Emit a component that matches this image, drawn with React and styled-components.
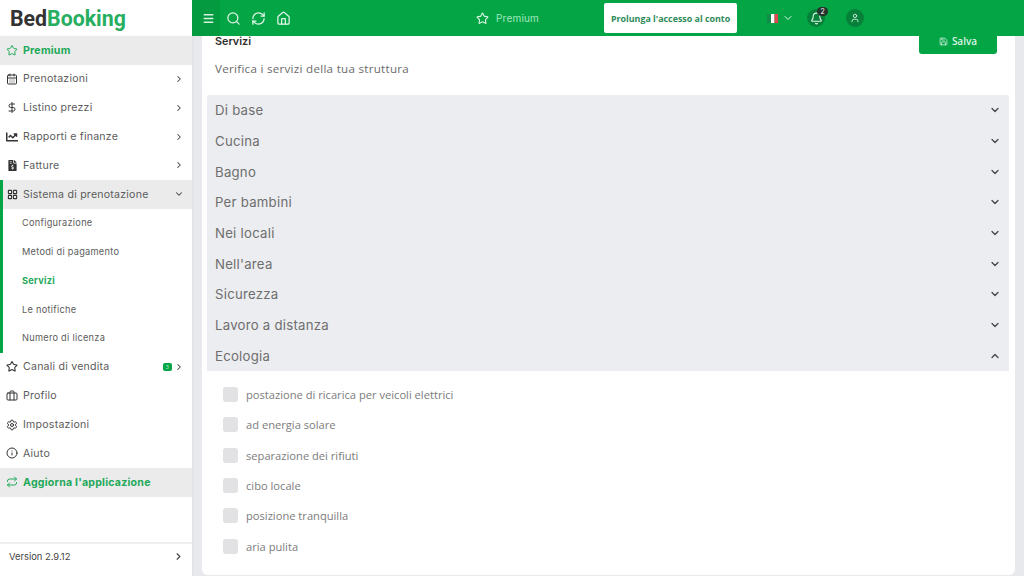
import React from 'react'
import styled, { createGlobalStyle } from 'styled-components'
import {
  Star, CalendarDays, DollarSign, LayoutGrid, Briefcase, Settings, Info, Repeat,
  Menu, Search, RefreshCw, Home, Bell, User, ChevronDown, ChevronUp, ChevronRight, Save,
} from 'lucide-react'
import { FaChartLine, FaFileInvoiceDollar } from 'react-icons/fa'

const GREEN = '#03a545'

const Global = createGlobalStyle`
  html, body { margin: 0; padding: 0; height: 100%; overflow: hidden; }
  body { font-family: "Inter", "Liberation Sans", sans-serif; background: #e8e9ed; }
  * { box-sizing: border-box; }
`

const Page = styled.div`
  display: grid;
  grid-template-columns: 192px 1fr;
  grid-template-rows: 36px 540px;
  width: 1024px;
  height: 576px;
  overflow: hidden;
`

const LogoBox = styled.div`
  display: flex;
  align-items: center;
  padding-left: 10px;
  background: #fff;
  font-family: "Roboto", "Liberation Sans", sans-serif;
  font-size: 21.3px;
  font-weight: 700;
  color: #333;
  span { color: #27ae60; }
`

const TopBar = styled.header`
  display: flex;
  align-items: center;
  background: ${GREEN};
  color: #fff;
`

const BurgerButton = styled.div`
  display: flex;
  align-items: center;
  justify-content: center;
  width: 28px;
  height: 36px;
  padding-left: 4px;
  background: #049a40;
  color: #d5f3e0;
`

const TopIcons = styled.div`
  display: flex;
  align-items: center;
  gap: 10px;
  margin-left: 6px;
  color: #e2f7ea;
`

const PremiumLink = styled.div`
  display: flex;
  align-items: center;
  gap: 7px;
  margin-left: 185px;
  font-size: 10px;
  letter-spacing: .2px;
  color: #a5e6bf;
  svg { color: #e2f7ea; }
`

const ExtendButton = styled.div`
  display: flex;
  align-items: center;
  justify-content: center;
  width: 133px;
  height: 30px;
  margin-left: 65px;
  border-radius: 2px;
  background: #fff;
  color: #2d8a58;
  font-family: "Open Sans", sans-serif;
  font-size: 8.9px;
  font-weight: 700;
  white-space: nowrap;
`

const FlagPicker = styled.div`
  display: flex;
  align-items: center;
  gap: 4px;
  margin-left: 30px;
  color: #e2f7ea;
`

const RoundIcon = styled.div`
  position: relative;
  display: flex;
  align-items: center;
  justify-content: center;
  width: 18px;
  height: 18px;
  margin-left: ${p => p.$gap}px;
  border-radius: 50%;
  background: #07803a;
  color: #dff5e8;
`

const Badge = styled.span`
  position: absolute;
  top: -2px;
  right: -3px;
  width: 11px;
  height: 9px;
  border-radius: 5px;
  background: #24332b;
  color: #fff;
  font-size: 7px;
  line-height: 9px;
  text-align: center;
`

const Sidebar = styled.nav`
  display: flex;
  flex-direction: column;
  background: #fff;
  box-shadow: 1px 0 3px rgba(0, 0, 0, .04);
`

const MenuList = styled.div`
  flex: 1;
`

const MenuRow = styled.div`
  display: flex;
  align-items: center;
  height: 28.8px;
  padding: 0 8px .5px 6px;
  background: ${p => (p.$shaded ? '#ebebeb' : 'transparent')};
  border-left: ${p => (p.$bar ? `3px solid ${GREEN}` : 'none')};
  padding-left: ${p => (p.$bar ? '3px' : '6px')};
  color: ${p => (p.$accent ? '#1fa95a' : '#5c5c5c')};
  font-size: 10.6px;
  font-weight: ${p => (p.$accent ? 700 : 400)};
  letter-spacing: .22px;
`

const MenuIcon = styled.span`
  display: flex;
  justify-content: center;
  width: 12px;
  margin-right: 5px;
  color: ${p => (p.$accent ? '#1fa95a' : '#333')};
`

const MenuLabel = styled.span`
  flex: 1;
`

const SubRow = styled.div`
  display: flex;
  align-items: center;
  height: 28.8px;
  padding: 0 0 1px 19px;
  border-left: 3px solid ${GREEN};
  color: ${p => (p.$active ? '#1fa95a' : '#5c5c5c')};
  font-size: 9.2px;
  font-weight: ${p => (p.$active ? 700 : 400)};
  letter-spacing: .28px;
`

const Arrow = styled.span`
  display: flex;
  color: #444;
`

const CountPill = styled.span`
  width: 9px;
  height: 8px;
  margin-right: 2px;
  border-radius: 2px;
  background: ${GREEN};
  color: #bfeed2;
  font-size: 5px;
  line-height: 8px;
  text-align: center;
`

const VersionRow = styled.div`
  display: flex;
  align-items: center;
  justify-content: space-between;
  height: 34px;
  padding: 0 8px 8px 9px;
  border-top: 2px solid #eeeeee;
  color: #444;
  font-size: 9.4px;
`

const Content = styled.main`
  padding: 0 9px 1px 10px;
  overflow: hidden;
`

const Card = styled.section`
  display: flex;
  flex-direction: column;
  height: 539px;
  padding: 0 6px 0 5px;
  border-radius: 0 0 6px 6px;
  background: #fff;
`

const CardHead = styled.div`
  display: flex;
  justify-content: space-between;
  align-items: flex-start;
  height: 59px;
  padding: 0 12px 0 8px;
`

const CardTitle = styled.h2`
  margin: 0;
  line-height: 11px;
  font-size: 10.8px;
  font-weight: 600;
  color: #2e2e2e;
`

const CardText = styled.p`
  margin: 14px 0 0;
  font-family: "Open Sans", sans-serif;
  font-size: 11.6px;
  line-height: 15px;
  color: #6b6b6b;
  letter-spacing: .28px;
`

const SaveButton = styled.div`
  display: flex;
  align-items: flex-start;
  justify-content: center;
  gap: 4px;
  width: 78px;
  height: 18px;
  padding-top: 0;
  border-radius: 0 0 3px 3px;
  background: ${GREEN};
  color: #d8f4e3;
  font-family: "Open Sans", sans-serif;
  font-size: 10px;
  line-height: 10px;
  font-weight: 600;
  svg { margin-top: 1px; }
`

const Accordion = styled.div`
  border-radius: 3px 3px 0 0;
  background: #ecedf0;
`

const AccordionRow = styled.div`
  display: flex;
  align-items: center;
  justify-content: space-between;
  height: 30.7px;
  padding: 0 8px;
  color: #6e6e6e;
  font-size: 13.2px;
  letter-spacing: .25px;
  svg { color: #444; }
`

const Options = styled.div`
  display: flex;
  flex-direction: column;
  padding: 8px 0 0 16px;
`

const Option = styled.label`
  display: flex;
  align-items: center;
  gap: 8px;
  height: 30.4px;
  font-family: "Open Sans", sans-serif;
  font-size: 11.15px;
  color: #7c7c7c;
`

const Check = styled.span`
  width: 15px;
  height: 15px;
  border-radius: 3px;
  background: #e2e2e4;
`

const Flag = () => (
  <svg width="11" height="9" viewBox="0 0 11 9" aria-hidden="true">
    <rect width="4" height="9" fill="#128a4a" />
    <rect x="4" width="3.5" height="9" fill="#fff" />
    <rect x="7.5" width="3.5" height="9" fill="#e04550" />
  </svg>
)

const rowsBefore = [
  { label: 'Prenotazioni', icon: <CalendarDays size={12} strokeWidth={2} /> },
  { label: 'Listino prezzi', icon: <DollarSign size={13} strokeWidth={2} /> },
  { label: 'Rapporti e finanze', icon: <FaChartLine size={12} /> },
  { label: 'Fatture', icon: <FaFileInvoiceDollar size={11} /> },
]

const subItems = ['Configurazione', 'Metodi di pagamento', 'Servizi', 'Le notifiche', 'Numero di licenza']

const rowsAfter = [
  { label: 'Profilo', icon: <Briefcase size={12} strokeWidth={2} /> },
  { label: 'Impostazioni', icon: <Settings size={12} strokeWidth={2} /> },
  { label: 'Aiuto', icon: <Info size={12} strokeWidth={2} /> },
]

const sections = ['Di base', 'Cucina', 'Bagno', 'Per bambini', 'Nei locali', "Nell'area", 'Sicurezza', 'Lavoro a distanza']

const ecology = [
  'postazione di ricarica per veicoli elettrici',
  'ad energia solare',
  'separazione dei rifiuti',
  'cibo locale',
  'posizione tranquilla',
  'aria pulita',
]

const App = () => (
  <Page>
    <Global />
    <LogoBox>Bed<span>Booking</span></LogoBox>
    <TopBar>
      <BurgerButton><Menu size={13} strokeWidth={2.5} /></BurgerButton>
      <TopIcons>
        <Search size={15} />
        <RefreshCw size={15} />
        <Home size={15} />
      </TopIcons>
      <PremiumLink><Star size={13} />Premium</PremiumLink>
      <ExtendButton>Prolunga l'accesso al conto</ExtendButton>
      <FlagPicker><Flag /><ChevronDown size={12} /></FlagPicker>
      <RoundIcon $gap={13}>
        <Bell size={13} />
        <Badge>2</Badge>
      </RoundIcon>
      <RoundIcon $gap={21}><User size={10} /></RoundIcon>
    </TopBar>

    <Sidebar>
      <MenuList>
        <MenuRow $shaded $accent>
          <MenuIcon $accent><Star size={13} /></MenuIcon>
          <MenuLabel>Premium</MenuLabel>
        </MenuRow>
        {rowsBefore.map(row => (
          <MenuRow key={row.label}>
            <MenuIcon>{row.icon}</MenuIcon>
            <MenuLabel>{row.label}</MenuLabel>
            <Arrow><ChevronRight size={10} strokeWidth={2.5} /></Arrow>
          </MenuRow>
        ))}
        <MenuRow $shaded $bar>
          <MenuIcon><LayoutGrid size={11} strokeWidth={2.4} /></MenuIcon>
          <MenuLabel>Sistema di prenotazione</MenuLabel>
          <Arrow><ChevronDown size={10} strokeWidth={2.5} /></Arrow>
        </MenuRow>
        {subItems.map(item => (
          <SubRow key={item} $active={item === 'Servizi'}>{item}</SubRow>
        ))}
        <MenuRow>
          <MenuIcon><Star size={13} strokeWidth={2.2} /></MenuIcon>
          <MenuLabel>Canali di vendita</MenuLabel>
          <CountPill>3</CountPill>
          <Arrow><ChevronRight size={10} strokeWidth={2.5} /></Arrow>
        </MenuRow>
        {rowsAfter.map(row => (
          <MenuRow key={row.label}>
            <MenuIcon>{row.icon}</MenuIcon>
            <MenuLabel>{row.label}</MenuLabel>
          </MenuRow>
        ))}
        <MenuRow $shaded $accent>
          <MenuIcon $accent><Repeat size={12} /></MenuIcon>
          <MenuLabel>Aggiorna l'applicazione</MenuLabel>
        </MenuRow>
      </MenuList>
      <VersionRow>
        Version 2.9.12
        <ChevronRight size={11} strokeWidth={2.5} />
      </VersionRow>
    </Sidebar>

    <Content>
      <Card>
        <CardHead>
          <div>
            <CardTitle>Servizi</CardTitle>
            <CardText>Verifica i servizi della tua struttura</CardText>
          </div>
          <SaveButton><Save size={9} />Salva</SaveButton>
        </CardHead>
        <Accordion>
          {sections.map(name => (
            <AccordionRow key={name}>{name}<ChevronDown size={12} strokeWidth={2.5} /></AccordionRow>
          ))}
          <AccordionRow>Ecologia<ChevronUp size={12} strokeWidth={2.5} /></AccordionRow>
        </Accordion>
        <Options>
          {ecology.map(name => (
            <Option key={name}><Check />{name}</Option>
          ))}
        </Options>
      </Card>
    </Content>
  </Page>
)

export default App
